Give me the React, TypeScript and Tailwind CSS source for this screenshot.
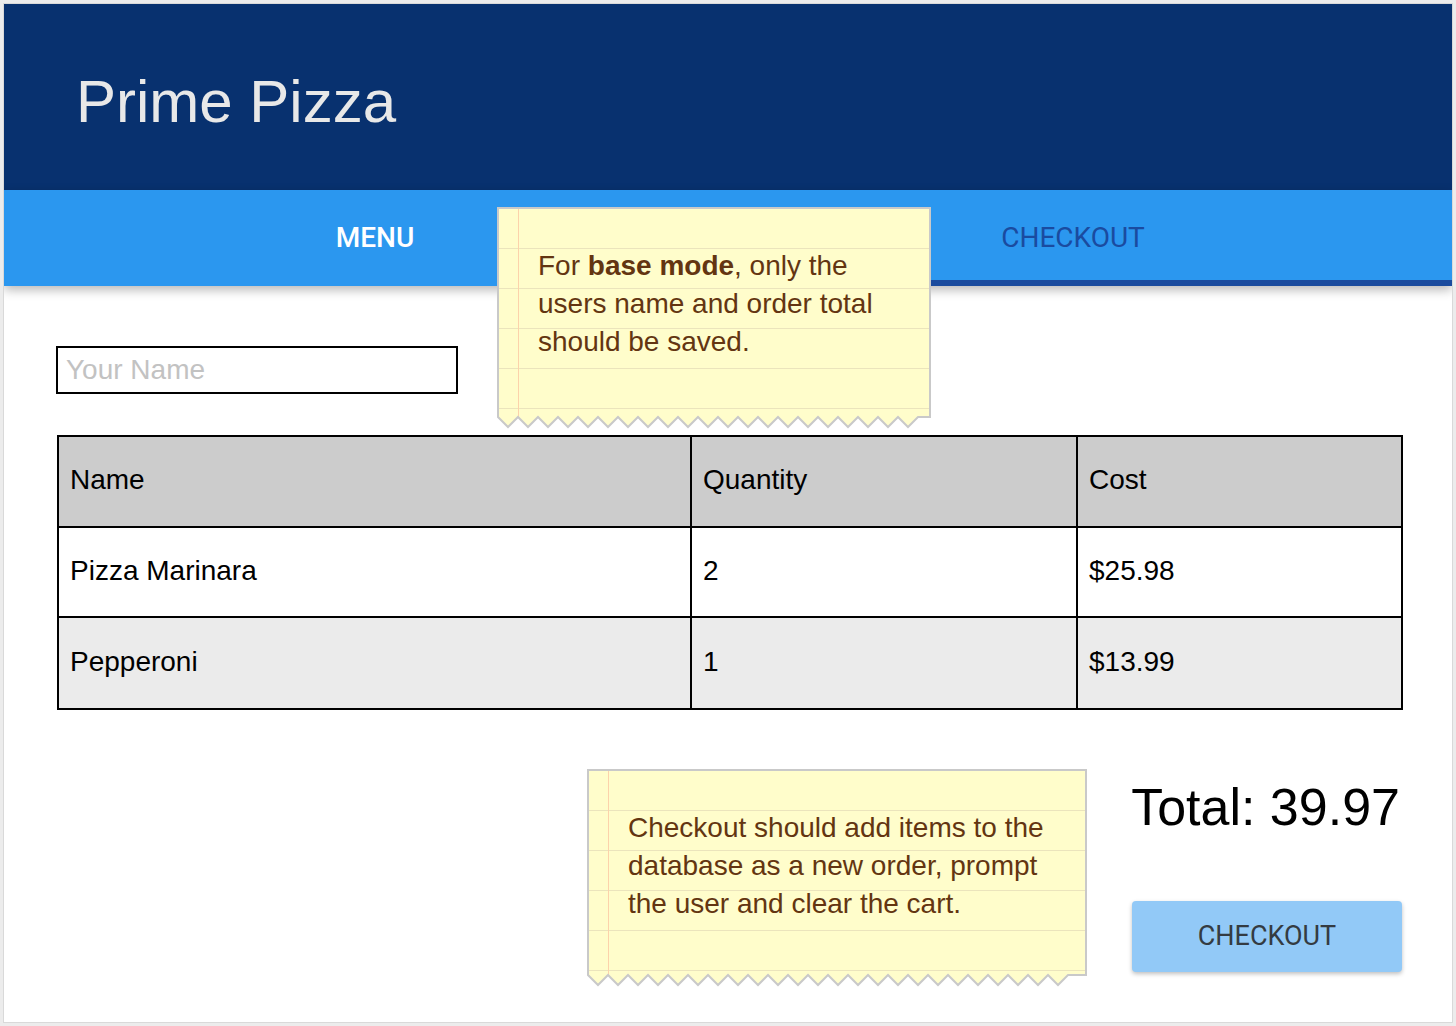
import React from "react";

function Note({
  w,
  b,
  id,
  className,
  children,
}: {
  w: number;
  b: number;
  id: string;
  className: string;
  children: React.ReactNode;
}) {
  const h = b + 12;
  const teeth = Math.floor((w - 12) / 20);
  const pts: string[] = [];
  for (let i = 0; i <= teeth * 2; i++) pts.push(`${1 + i * 10},${i % 2 ? b + 10 : b}`);
  const poly = `1,1 ${w - 1},1 ${w - 1},${b} ${[...pts].reverse().join(" ")}`;
  const lines: number[] = [];
  for (let y = 41; y < b; y += 40) lines.push(y);
  return (
    <div className={className} style={{ width: w, height: h }}>
      <svg className="absolute inset-0" width={w} height={h} viewBox={`0 0 ${w} ${h}`}>
        <defs>
          <clipPath id={id}>
            <polygon points={poly} />
          </clipPath>
        </defs>
        <polygon points={poly} fill="#fffdcb" />
        <g clipPath={`url(#${id})`}>
          {lines.map((y) => (
            <line key={y} x1={0} x2={w} y1={y + 0.5} y2={y + 0.5} stroke="#ebe4bc" strokeWidth={1} />
          ))}
          <line x1={21.5} x2={21.5} y1={0} y2={h} stroke="#fcd2ab" strokeWidth={1} />
        </g>
        <polygon points={poly} fill="none" stroke="#c9c9c9" strokeWidth={2} />
      </svg>
      <div className="relative pl-[41px] pt-[40px] pr-[16px] text-[28px] leading-[38px] text-[#633511] font-['Liberation_Sans',Arial,sans-serif]">
        {children}
      </div>
    </div>
  );
}

export default function App() {
  const cell = "border-2 border-black pl-[11px] pb-[3px]";
  return (
    <div className="w-[1456px] h-[1026px] bg-[#ececec] p-[3px] font-['Liberation_Sans',Arial,sans-serif]">
      <div className="relative w-full h-full border border-[#d9d9d9] bg-white overflow-hidden">
        <header className="h-[186px] bg-[#08316f] pl-[72px] pt-[68px]">
          <h1 className="text-[60px] leading-[60px] text-[#e8e8e8] font-normal">Prime Pizza</h1>
        </header>
        <nav className="relative z-[1] flex h-[96px] bg-[#2b97ef] shadow-[0_4px_10px_rgba(0,0,0,0.28)] font-['Roboto',sans-serif]">
          <div className="flex-1 flex items-center justify-center pl-[22px] pt-[6px] border-b-[6px] border-transparent">
            <span className="text-[28px] font-medium text-white">MENU</span>
          </div>
          <div className="flex-1 flex items-center justify-center pr-[30px] pt-[6px] border-b-[6px] border-[#1a4b9e]">
            <span className="text-[28px] font-normal text-[#1a4ba0]">CHECKOUT</span>
          </div>
        </nav>
        <main className="pl-[52px] pr-[49px] pt-[60px]">
          <div className="w-[402px] h-[48px] border-2 border-black flex items-center pl-[8px]">
            <span className="text-[28px] text-[#c2c2c2]">Your Name</span>
          </div>
          <table className="mt-[41px] ml-[1px] w-[1346px] border-collapse border-2 border-black text-[28px] text-black">
            <tbody>
              <tr className="h-[91px] bg-[#cccccc]">
                <td className={`w-[633px] ${cell}`}>Name</td>
                <td className={`w-[386px] ${cell}`}>Quantity</td>
                <td className={cell}>Cost</td>
              </tr>
              <tr className="h-[90px] bg-white">
                <td className={cell}>Pizza Marinara</td>
                <td className={cell}>2</td>
                <td className={cell}>$25.98</td>
              </tr>
              <tr className="h-[92px] bg-[#ebebeb]">
                <td className={cell}>Pepperoni</td>
                <td className={cell}>1</td>
                <td className={cell}>$13.99</td>
              </tr>
            </tbody>
          </table>
          <div className="flex flex-col items-end">
            <div className="mt-[71px] mr-[3px] text-[52px] leading-[52px] text-black">Total: 39.97</div>
            <button className="mt-[68px] mr-[1px] w-[270px] h-[71px] rounded-[4px] bg-[#92c9f7] shadow-[0_2px_4px_rgba(0,0,0,0.25)] font-['Roboto',sans-serif] text-[27px] text-[#343b42]">
              CHECKOUT
            </button>
          </div>
        </main>
        <Note w={434} b={210} id="n1" className="absolute left-[493px] top-[203px] z-10">
          For <b className="font-bold">base mode</b>, only the
          <br />
          users name and order total
          <br />
          should be saved.
        </Note>
        <Note w={500} b={206} id="n2" className="absolute left-[583px] top-[765px] z-10">
          Checkout should add items to the
          <br />
          database as a new order, prompt
          <br />
          the user and clear the cart.
        </Note>
      </div>
    </div>
  );
}
